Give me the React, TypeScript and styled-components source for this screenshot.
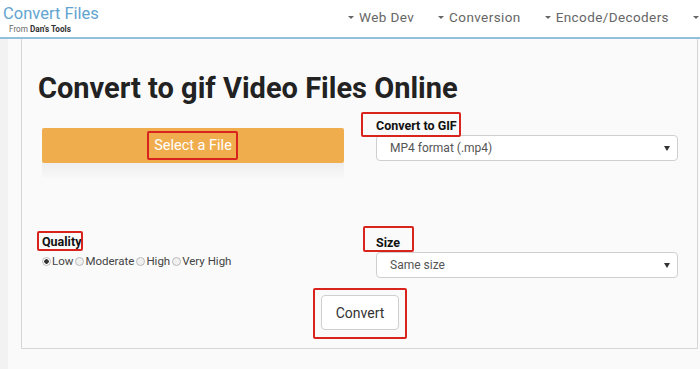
import React from "react";
import styled, { createGlobalStyle } from "styled-components";

const GlobalStyle = createGlobalStyle`
  html, body {
    margin: 0;
    padding: 0;
    background: #fafafa;
    font-family: Roboto, "Liberation Sans", Arial, sans-serif;
    overflow: hidden;
  }
`;

const Header = styled.header`
  height: 37px;
  background: #fff;
  border-bottom: 2px solid #93bfdc;
  display: flex;
  justify-content: space-between;
  align-items: flex-start;
  box-sizing: content-box;
`;

const Brand = styled.div`
  padding: 3px 0 0 3px;
  .name {
    font-size: 16.5px;
    line-height: 21px;
    color: #62a4d0;
  }
  .from {
    font-size: 8.2px;
    line-height: 11px;
    color: #666;
    padding-left: 6px;
    b {
      color: #333;
    }
  }
`;

const Nav = styled.nav`
  display: flex;
  padding-top: 9px;
  margin-right: -4px;
  white-space: nowrap;
`;

const NavItem = styled.div`
  font-size: 13.5px;
  letter-spacing: 0.4px;
  color: #666;
  line-height: 16px;
  margin-left: 24px;
  display: flex;
  align-items: center;
  &:before {
    content: "";
    border-left: 3px solid transparent;
    border-right: 3px solid transparent;
    border-top: 3px solid #666;
    margin-right: 5px;
  }
`;

const Page = styled.div`
  border-left: 8px solid #f2f2f2;
  padding-left: 13px;
  padding-right: 2px;
  height: 330px;
`;

const Panel = styled.main`
  border: 1px solid #d6d6d6;
  border-top: none;
  background: #fafafa;
  padding: 31px 19px 18px 20px;
`;

const Title = styled.h1`
  margin: 0 0 0 -4px;
  font-size: 29px;
  line-height: 36px;
  font-weight: 700;
  color: #222;
`;

const Grid = styled.div`
  display: grid;
  grid-template-columns: 302px 302px;
  column-gap: 32px;
  margin-top: 8px;
`;

const Cell = styled.div<{ $top?: number }>`
  padding-top: ${(p) => p.$top ?? 0}px;
  display: flex;
  flex-direction: column;
  align-items: flex-start;
`;

const Marked = styled.span<{ $t: number; $r: number; $b: number; $l: number }>`
  position: relative;
  &:after {
    content: "";
    position: absolute;
    top: -${(p) => p.$t}px;
    right: -${(p) => p.$r}px;
    bottom: -${(p) => p.$b}px;
    left: -${(p) => p.$l}px;
    border: 2px solid #d9231d;
    border-radius: 2px;
    pointer-events: none;
  }
`;

const FileButton = styled.div`
  width: 302px;
  height: 35px;
  background: #f0ad4e;
  border-radius: 2px;
  color: #fff;
  font-size: 14.5px;
  display: flex;
  align-items: center;
  justify-content: center;
`;

const ShadowStrip = styled.div`
  width: 302px;
  height: 15px;
  background: linear-gradient(#eeeeee, #f8f8f8);
`;

const Label = styled.div`
  font-size: 12.5px;
  font-weight: 700;
  color: #111;
  line-height: 14px;
  height: 16px;
`;

const Select = styled.div`
  width: 302px;
  height: 26px;
  box-sizing: border-box;
  background: #fff;
  border: 1px solid #cfcfcf;
  border-radius: 4px;
  display: flex;
  align-items: center;
  justify-content: space-between;
  padding: 0 7px 0 13px;
  font-size: 12px;
  color: #555;
  &:after {
    content: "";
    border-left: 3px solid transparent;
    border-right: 3px solid transparent;
    border-top: 5px solid #333;
  }
`;

const Radios = styled.div`
  display: flex;
  align-items: center;
  margin-top: 3px;
  font-size: 11.5px;
  color: #444;
`;

const Radio = styled.span<{ $on?: boolean }>`
  display: flex;
  align-items: center;
  margin-right: 2px;
  &:before {
    content: "";
    width: 7px;
    height: 7px;
    border-radius: 50%;
    border: 1px solid #bbb;
    background: ${(p) => (p.$on ? "radial-gradient(#333 0 2px, #fff 2.5px)" : "#f0f0f0")};
    margin-right: 1px;
  }
`;

const Footer = styled.div`
  display: flex;
  justify-content: center;
  margin-top: 17px;
`;

const ConvertButton = styled.div`
  width: 78px;
  height: 35px;
  box-sizing: border-box;
  border: 1px solid #cfcfcf;
  border-radius: 4px;
  background: #fff;
  font-size: 14px;
  color: #333;
  display: flex;
  align-items: center;
  justify-content: center;
`;

export default function App() {
  return (
    <>
      <GlobalStyle />
      <Header>
        <Brand>
          <div className="name">Convert Files</div>
          <div className="from">
            From <b>Dan's Tools</b>
          </div>
        </Brand>
        <Nav>
          <NavItem>Web Dev</NavItem>
          <NavItem>Conversion</NavItem>
          <NavItem>Encode/Decoders</NavItem>
          <NavItem />
        </Nav>
      </Header>
      <Page>
        <Panel>
          <Title>Convert to gif Video Files Online</Title>
          <Grid>
            <Cell $top={14}>
              <FileButton>
                <Marked $t={6} $r={6} $b={6} $l={7}>Select a File</Marked>
              </FileButton>
              <ShadowStrip />
            </Cell>
            <Cell $top={5}>
              <Label>
                <Marked $t={6} $r={4} $b={4} $l={15}>Convert to GIF</Marked>
              </Label>
              <Select>MP4 format (.mp4)</Select>
            </Cell>
            <Cell $top={57}>
              <Label>
                <Marked $t={3} $r={2} $b={2} $l={5}>Quality</Marked>
              </Label>
              <Radios>
                <Radio $on>Low</Radio>
                <Radio>Moderate</Radio>
                <Radio>High</Radio>
                <Radio>Very High</Radio>
              </Radios>
            </Cell>
            <Cell $top={58}>
              <Label>
                <Marked $t={9} $r={14} $b={2} $l={13}>Size</Marked>
              </Label>
              <Select>Same size</Select>
            </Cell>
          </Grid>
          <Footer>
            <Marked $t={7} $r={8} $b={9} $l={8}>
              <ConvertButton>Convert</ConvertButton>
            </Marked>
          </Footer>
        </Panel>
      </Page>
    </>
  );
}
